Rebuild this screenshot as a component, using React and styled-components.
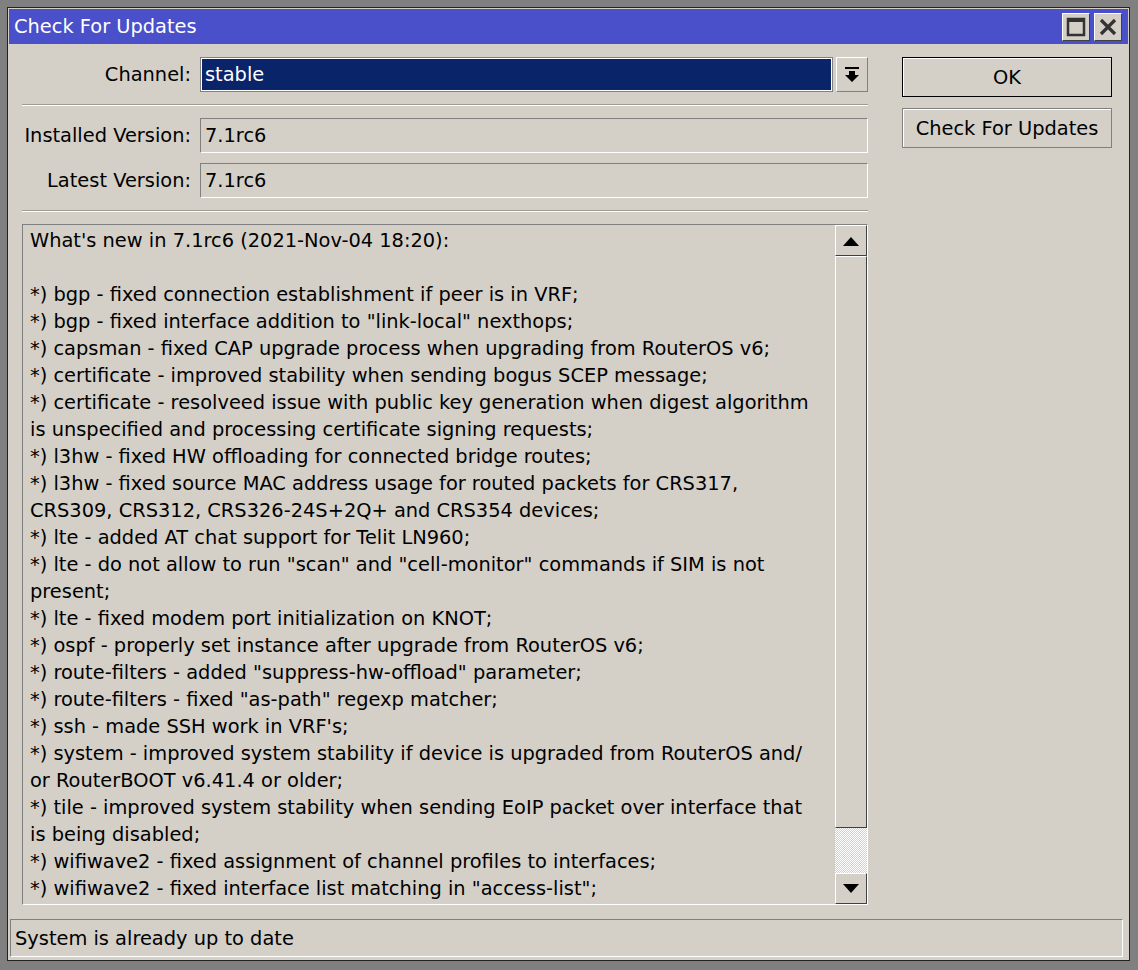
import React from 'react'
import styled, { createGlobalStyle } from 'styled-components'

const Global = createGlobalStyle`
  html, body {
    margin: 0;
    padding: 0;
    background: #808080;
  }
  body {
    font-family: "DejaVu Sans", Verdana, sans-serif;
    font-size: 19.4px;
    color: #000;
  }
`;

const notes = [
  "What's new in 7.1rc6 (2021-Nov-04 18:20):",
  '',
  '*) bgp - fixed connection establishment if peer is in VRF;',
  '*) bgp - fixed interface addition to "link-local" nexthops;',
  '*) capsman - fixed CAP upgrade process when upgrading from RouterOS v6;',
  '*) certificate - improved stability when sending bogus SCEP message;',
  '*) certificate - resolveed issue with public key generation when digest algorithm',
  'is unspecified and processing certificate signing requests;',
  '*) l3hw - fixed HW offloading for connected bridge routes;',
  '*) l3hw - fixed source MAC address usage for routed packets for CRS317,',
  'CRS309, CRS312, CRS326-24S+2Q+ and CRS354 devices;',
  '*) lte - added AT chat support for Telit LN960;',
  '*) lte - do not allow to run "scan" and "cell-monitor" commands if SIM is not',
  'present;',
  '*) lte - fixed modem port initialization on KNOT;',
  '*) ospf - properly set instance after upgrade from RouterOS v6;',
  '*) route-filters - added "suppress-hw-offload" parameter;',
  '*) route-filters - fixed "as-path" regexp matcher;',
  "*) ssh - made SSH work in VRF's;",
  '*) system - improved system stability if device is upgraded from RouterOS and/',
  'or RouterBOOT v6.41.4 or older;',
  '*) tile - improved system stability when sending EoIP packet over interface that',
  'is being disabled;',
  '*) wifiwave2 - fixed assignment of channel profiles to interfaces;',
  '*) wifiwave2 - fixed interface list matching in "access-list";',
];

export default function App() {
  return (
    <Page>
      <Global />
      <Window>
        <TitleBar>
          <Title>Check For Updates</Title>
          <TitleButtons>
            <TitleButton>
              <svg width="20" height="20" viewBox="0 0 20 20">
                <rect x="2" y="2" width="16" height="16" fill="none" stroke="#333" strokeWidth="2.5" />
                <rect x="2" y="2" width="16" height="3" fill="#333" />
              </svg>
            </TitleButton>
            <TitleButton>
              <svg width="20" height="20" viewBox="0 0 20 20">
                <path d="M3 3 L17 17 M17 3 L3 17" stroke="#333" strokeWidth="3.2" />
              </svg>
            </TitleButton>
          </TitleButtons>
        </TitleBar>

        <Body>
          <LeftCol>
            <FormRow>
              <Label>Channel:</Label>
              <SelectWrap>
                <SelectBox>stable</SelectBox>
                <DropButton>
                  <svg width="16" height="18" viewBox="0 0 16 18">
                    <rect x="1" y="1" width="14" height="2" fill="#000" />
                    <path d="M5 5 H11 V9 H15 L8 16 L1 9 H5 Z" fill="#000" />
                  </svg>
                </DropButton>
              </SelectWrap>
            </FormRow>
            <Separator />
            <FormRow>
              <Label>Installed Version:</Label>
              <Field>7.1rc6</Field>
            </FormRow>
            <FormRow $gap>
              <Label>Latest Version:</Label>
              <Field>7.1rc6</Field>
            </FormRow>
            <Separator />
            <TextArea>
              <TextContent>
                {notes.map((l, i) => (
                  <Line key={i}>{l || ' '}</Line>
                ))}
              </TextContent>
              <ScrollBar>
                <ScrollButton>
                  <svg width="18" height="10" viewBox="0 0 18 10">
                    <path d="M1 10 L9 1 L17 10 Z" fill="#000" />
                  </svg>
                </ScrollButton>
                <Thumb />
                <Track />
                <ScrollButton>
                  <svg width="18" height="10" viewBox="0 0 18 10">
                    <path d="M1 0 L17 0 L9 9 Z" fill="#000" />
                  </svg>
                </ScrollButton>
              </ScrollBar>
            </TextArea>
          </LeftCol>

          <RightCol>
            <Button $default>OK</Button>
            <Button>Check For Updates</Button>
          </RightCol>
        </Body>

        <StatusBar>System is already up to date</StatusBar>
      </Window>
    </Page>
  )
}

const Page = styled.div`
  padding: 7px 8px 9px 7px;
  width: 1138px;
  height: 970px;
  box-sizing: border-box;
`;

const Window = styled.div`
  width: 1123px;
  height: 954px;
  box-sizing: border-box;
  border: 1px solid #222;
  padding: 1px;
  background: #d4d0c8;
  display: flex;
  flex-direction: column;
`;

const TitleBar = styled.div`
  height: 35px;
  background: #4a50c9;
  display: flex;
  align-items: center;
  justify-content: space-between;
  padding: 0 6px 0 5px;
  flex-shrink: 0;
`;

const Title = styled.div`
  color: #fff;
`;

const TitleButtons = styled.div`
  display: flex;
  gap: 4px;
`;

const TitleButton = styled.div`
  width: 28px;
  height: 28px;
  box-sizing: border-box;
  background: #d4d0c8;
  border: 1px solid;
  border-color: #fff #404040 #404040 #fff;
  display: flex;
  align-items: center;
  justify-content: center;
`;

const Body = styled.div`
  flex: 1;
  display: flex;
  gap: 34px;
  padding: 13px 16px 0 13px;
`;

const LeftCol = styled.div`
  width: 846px;
  display: flex;
  flex-direction: column;
`;

const RightCol = styled.div`
  width: 210px;
  display: flex;
  flex-direction: column;
  gap: 11px;
`;

const FormRow = styled.div`
  display: flex;
  align-items: center;
  height: 35px;
  gap: 9px;
  margin-top: ${p => (p.$gap ? '10px' : '0')};
`;

const Label = styled.div`
  width: 169px;
  text-align: right;
  white-space: nowrap;
`;

const SelectWrap = styled.div`
  flex: 1;
  display: flex;
  gap: 3px;
  height: 100%;
`;

const SelectBox = styled.div`
  flex: 1;
  box-sizing: border-box;
  background: #0a246a;
  color: #fff;
  border: 1px solid #808080;
  box-shadow: inset 0 0 0 1px #fff;
  display: flex;
  align-items: center;
  padding-left: 4px;
`;

const DropButton = styled.div`
  width: 32px;
  box-sizing: border-box;
  border: 1px solid;
  border-color: #fff #808080 #808080 #fff;
  display: flex;
  align-items: center;
  justify-content: center;
`;

const Field = styled.div`
  flex: 1;
  height: 100%;
  box-sizing: border-box;
  border: 1px solid;
  border-color: #808080 #fff #fff #808080;
  display: flex;
  align-items: center;
  padding-left: 4px;
`;

const Separator = styled.div`
  height: 1px;
  background: #a09c94;
  border-bottom: 1px solid #fff;
  margin: 12px 0;
`;

const TextArea = styled.div`
  height: 681px;
  box-sizing: border-box;
  border: 1px solid;
  border-color: #808080 #fff #fff #808080;
  display: flex;
`;

const TextContent = styled.div`
  flex: 1;
  padding: 2px 0 0 7px;
  overflow: hidden;
`;

const Line = styled.div`
  white-space: pre;
  line-height: 27px;
  height: 27px;
`;

const ScrollBar = styled.div`
  width: 32px;
  display: flex;
  flex-direction: column;
`;

const ScrollButton = styled.div`
  height: 31px;
  box-sizing: border-box;
  border: 1px solid;
  border-color: #fff #404040 #404040 #fff;
  display: flex;
  align-items: center;
  justify-content: center;
`;

const Thumb = styled.div`
  height: 572px;
  box-sizing: border-box;
  border: 1px solid;
  border-color: #fff #404040 #404040 #fff;
`;

const Track = styled.div`
  flex: 1;
  background-color: #d4d0c8;
  background-image: repeating-conic-gradient(#fff 0 25%, #d4d0c8 0 50%);
  background-size: 2px 2px;
`;

const Button = styled.div`
  height: 40px;
  box-sizing: border-box;
  border: 1px solid ${p => (p.$default ? '#000' : '#808080')};
  box-shadow: inset 1px 1px 0 #fff;
  display: flex;
  align-items: center;
  justify-content: center;
  white-space: nowrap;
`;

const StatusBar = styled.div`
  height: 38px;
  box-sizing: border-box;
  margin: 14px 5px 2px 1px;
  border: 1px solid;
  border-color: #808080 #fff #fff #808080;
  display: flex;
  align-items: center;
  padding-left: 4px;
  flex-shrink: 0;
`;
